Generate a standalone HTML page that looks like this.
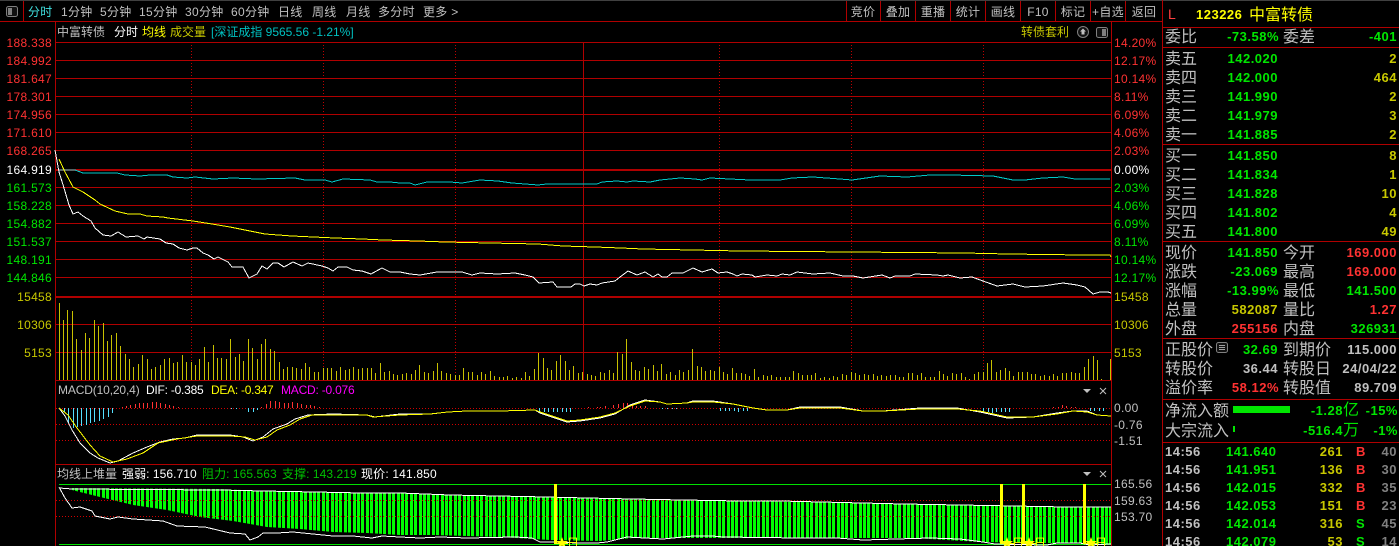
<!DOCTYPE html>
<html><head><meta charset="utf-8"><title>123226 中富转债</title>
<style>
html,body{margin:0;padding:0;background:#000;width:1399px;height:546px;overflow:hidden}
svg{display:block}
text{font-family:"Liberation Sans","WenQuanYi Zen Hei","Noto Sans CJK SC",sans-serif;font-size:12px;fill:#c0c0c0;letter-spacing:.3px}
.r{fill:#ff3232}.g{fill:#00e600}.y{fill:#c8c800}.w{fill:#fff}.Y{fill:#ff0}.c{fill:#00c0c0}.m{fill:#f0f}.d{fill:#00c000}.s{fill:#808080}
.e{text-anchor:end}.mid{text-anchor:middle}
.L{font-size:16px;letter-spacing:0}
.b{font-size:13px;font-weight:bold;letter-spacing:.5px}
.n{letter-spacing:0}
.u{font-size:16px;font-weight:normal;letter-spacing:0}
.crisp{shape-rendering:crispEdges}
.ln{fill:none;stroke-width:1;shape-rendering:crispEdges}
</style></head><body>
<svg width="1399" height="546" viewBox="0 0 1399 546" xmlns="http://www.w3.org/2000/svg">
<rect width="1399" height="546" fill="#000"/>
<rect width="1399" height="1" fill="#404040"/>

<!-- frame lines -->
<g class="crisp" stroke="#b00000" fill="none">
<path d="M0 21.5H1162M23.5 1V21M846.5 1V21M880.5 1V21M915.5 1V21M950.5 1V21M985.5 1V21M1020.5 1V21M1055.5 1V21M1090.5 1V21M1125.5 1V21"/>
<path d="M1162.5 0V546"/>
<path d="M55.5 21V546M1111.5 21V546"/>
<path d="M55 42.5H1111M55 60.5H1111M55 78.5H1111M55 96.5H1111M55 114.5H1111M55 132.5H1111M55 150.5H1111M55 187.5H1111M55 205.5H1111M55 223.5H1111M55 241.5H1111M55 259.5H1111M55 277.5H1111M55 324.5H1111M55 352.5H1111M55 380.5H1111M55 464.5H1111"/>
<path stroke-width="2" d="M55 170H1111M55 297H1111"/>
<path d="M583.5 42V380"/>
<path stroke="#c00000" stroke-dasharray="1 2" d="M191.5 42V380M323.5 42V380M455.5 42V380M719.5 42V380M851.5 42V380M983.5 42V380"/>
<path stroke="#d00000" stroke-dasharray="1 2" d="M56 408.5H1111M56 424.5H1111M56 440.5H1111"/>
<path d="M1163 27.5H1399M1163 47.5H1399M1163 144.5H1399M1163 241.5H1399M1163 338.5H1399M1163 399.5H1399M1163 442.5H1399"/>
</g>

<!-- toolbar -->
<rect x="6.5" y="6.5" width="11" height="10" rx="2" fill="#111" stroke="#808080"/>
<rect x="8" y="8" width="4" height="7" fill="#808080"/>
<g>
<text x="28" y="16" style="fill:#40e0e0">分时</text>
<text x="61" y="16">1分钟</text>
<text x="100" y="16">5分钟</text>
<text x="139" y="16">15分钟</text>
<text x="185" y="16">30分钟</text>
<text x="231" y="16">60分钟</text>
<text x="278" y="16">日线</text>
<text x="312" y="16">周线</text>
<text x="346" y="16">月线</text>
<text x="378" y="16">多分时</text>
<text x="423" y="16">更多 &gt;</text>
<text x="863" y="16" class="mid">竞价</text>
<text x="898" y="16" class="mid">叠加</text>
<text x="933" y="16" class="mid">重播</text>
<text x="968" y="16" class="mid">统计</text>
<text x="1003" y="16" class="mid">画线</text>
<text x="1038" y="16" class="mid">F10</text>
<text x="1073" y="16" class="mid">标记</text>
<text x="1108" y="16" class="mid">+自选</text>
<text x="1144" y="16" class="mid">返回</text>
</g>

<!-- chart title -->
<text x="57" y="36" class="n">中富转债</text>
<text x="114" y="36" class="w n">分时</text>
<text x="142" y="36" class="Y n">均线</text>
<text x="170" y="36" class="y n">成交量</text>
<text x="211" y="36" class="c" textLength="143" lengthAdjust="spacing">[深证成指 9565.56 -1.21%]</text>
<text x="1021" y="36" class="y n">转债套利</text>
<circle cx="1083" cy="32" r="5.5" fill="#111" stroke="#808080"/>
<path d="M1083 28.5l3 3h-1.500v3h-3v-3h-1.500z" fill="#c0c0c0"/>
<rect x="1096.500" y="27.500" width="11" height="10" rx="2" fill="#111" stroke="#808080"/>
<rect x="1102" y="29" width="4" height="7" fill="#808080"/>

<!-- left axis -->
<g class="e">
<text x="52" y="47" class="r e">188.338</text>
<text x="52" y="65" class="r e">184.992</text>
<text x="52" y="83" class="r e">181.647</text>
<text x="52" y="101" class="r e">178.301</text>
<text x="52" y="119" class="r e">174.956</text>
<text x="52" y="137" class="r e">171.610</text>
<text x="52" y="155" class="r e">168.265</text>
<text x="52" y="174" class="w e">164.919</text>
<text x="52" y="192" class="g e">161.573</text>
<text x="52" y="210" class="g e">158.228</text>
<text x="52" y="228" class="g e">154.882</text>
<text x="52" y="246" class="g e">151.537</text>
<text x="52" y="264" class="g e">148.191</text>
<text x="52" y="282" class="g e">144.846</text>
<text x="52" y="301" class="y e">15458</text>
<text x="52" y="329" class="y e">10306</text>
<text x="52" y="357" class="y e">5153</text>
</g>
<!-- right axis -->
<text x="1114" y="47" class="r">14.20%</text>
<text x="1114" y="65" class="r">12.17%</text>
<text x="1114" y="83" class="r">10.14%</text>
<text x="1114" y="101" class="r">8.11%</text>
<text x="1114" y="119" class="r">6.09%</text>
<text x="1114" y="137" class="r">4.06%</text>
<text x="1114" y="155" class="r">2.03%</text>
<text x="1114" y="174" class="w">0.00%</text>
<text x="1114" y="192" class="g">2.03%</text>
<text x="1114" y="210" class="g">4.06%</text>
<text x="1114" y="228" class="g">6.09%</text>
<text x="1114" y="246" class="g">8.11%</text>
<text x="1114" y="264" class="g">10.14%</text>
<text x="1114" y="282" class="g">12.17%</text>
<text x="1114" y="301" class="y">15458</text>
<text x="1114" y="329" class="y">10306</text>
<text x="1114" y="357" class="y">5153</text>
<text x="1114" y="412">0.00</text>
<text x="1114" y="429">-0.76</text>
<text x="1114" y="445">-1.51</text>
<text x="1114" y="488">165.56</text>
<text x="1114" y="505">159.63</text>
<text x="1114" y="521">153.70</text>

<!-- price lines -->
<polyline class="ln" stroke="#00c8c8" points="59,170 75,170 83,173 112,173 117,173 125,175 140,176 150,175 167,175 173,177 187,178 195,177 213,179 233,178 257,179 295,178 305,180 325,180 332,182 343,179 370,180 377,182 390,182 400,183 410,183 415,185 427,182 450,182 462,183 480,180 498,181 512,183 525,184 538,185 547,184 597,184 602,182 617,181 627,182 633,181 650,182 660,180 680,178 695,179 702,180 710,178 750,180 780,180 792,178 813,177 840,179 852,180 880,176 907,177 930,175 950,175 993,176 1013,180 1025,180 1043,178 1063,177 1075,179 1110,179"/>
<polyline class="ln" stroke="#ff0" points="59,159 65,172 73,187 83,192 95,200 100,204 115,211 128,214 140,214 147,216 163,217 168,218 193,221 212,224 230,227 265,234 292,236 335,238 362,239 383,240 418,241 445,242 489,243 538,244 563,246 595,247 621,248 643,249 692,250 740,251 853,252 964,253 1008,254 1083,255 1110,255 1111,257"/>
<polyline class="ln" stroke="#fff" points="55,150 59,172 64,188 69,205 73,214 78,212 83,216 91,221 95,228 103,235 111,236 118,232 126,237 138,236 144,239 147,237 160,239 166,243 173,244 179,248 187,250 193,248 197,248 203,253 208,255 214,259 218,257 228,262 232,267 243,267 249,278 257,274 262,266 267,269 273,263 278,263 284,267 293,262 302,266 308,263 322,266 328,268 333,271 338,267 347,267 353,270 362,271 371,274 382,268 390,272 400,272 410,274 420,275 437,272 462,272 472,275 480,273 497,274 515,273 525,275 533,277 539,283 553,282 557,287 571,287 575,284 580,284 584,286 590,284 597,285 602,283 615,281 620,277 628,271 637,275 645,272 653,277 658,274 662,277 667,277 672,273 683,273 693,268 702,272 712,269 718,273 727,272 733,274 737,276 742,274 752,275 755,277 767,275 777,276 782,274 790,275 797,272 813,274 830,273 843,276 853,276 863,278 882,275 890,278 895,276 910,276 915,274 937,275 943,276 948,275 960,278 972,277 983,281 997,286 1013,284 1025,287 1043,286 1063,283 1077,285 1085,287 1093,294 1100,292 1108,292 1111,293"/>

<!-- volume bars -->
<path fill="none" stroke="#c8c000" d="M59.5 380v-77m4 77v-60m4 60v-70m5 70v-69m4 69v-41m5 41v-30m4 30v-47m4 47v-42m5 42v-60m4 60v-54m5 54v-57m4 57v-39m4 39v-45m5 45v-47m4 47v-34m5 34v-26m4 26v-21m4 21v-13m5 13v-16m4 16v-25m5 25v-21m4 21v-11m4 11v-13m5 13v-15m4 15v-21m5 21v-22m4 22v-17m4 17v-18m5 18v-25m4 25v-18m5 18v-18m4 18v-15m4 15v-21m5 21v-33m4 33v-18m5 18v-35m4 35v-22m4 22v-22m5 22v-21m4 21v-41m5 41v-23m4 23v-26m4 26v-19m5 19v-41m4 41v-32m5 32v-21m4 21v-36m4 36v-41m5 41v-31m4 31v-29m5 29v-18m4 18v-11m4 11v-13m5 13v-13m4 13v-12m5 12v-11m4 11v-17m4 17v-13m5 13v-8m4 8v-8m5 8v-12m4 12v-12m4 12v-12m5 12v-9m4 9v-13m5 13v-10m4 10v-11m4 11v-13m5 13v-11m4 11v-12m5 12v-12m4 12v-12m4 12v-7m5 7v-17m4 17v-8m5 8v-9m4 9v-6m4 6v-5m5 5v-6m4 6v-7m5 7v-6m4 6v-10m4 10v-15m5 15v-8m4 8v-7m5 7v-9m4 9v-17m4 17v-9m5 9v-7m4 7v-6m5 6v-5m4 5v-5m4 5v-12m5 12v-8m4 8v-8m5 8v-5m4 5v-8m4 8v-6m5 6v-9m4 9v-4m5 4v-3m4 3v-3m4 3v-4m5 4v-2m4 2v-3m5 3v-2m4 2v-8m4 8v-4m5 4v-11m4 11v-27m5 27v-22m4 22v-12m4 12v-10m5 10v-19m4 19v-25m5 25v-19m4 19v-10m4 10v-14m5 14v-7m4 7v-8m5 8v-6m4 6v-5m4 5v-4m5 4v-8m4 8v-7m5 7v-10m4 10v-7m4 7v-28m5 28v-26m4 26v-41m5 41v-18m4 18v-10m4 10v-9m5 9v-13m4 13v-11m5 11v-15m4 15v-9m4 9v-16m5 16v-6m4 6v-8m5 8v-5m4 5v-10m4 10v-8m5 8v-10m4 10v-31m5 31v-14m4 14v-13m4 13v-9m5 9v-10m4 10v-9m5 9v-13m4 13v-8m4 8v-6m5 6v-12m4 12v-7m5 7v-7m4 7v-6m4 6v-4m5 4v-11m4 11v-3m5 3v-5m4 5v-4m4 4v-5m5 5v-3m4 3v-3m5 3v-3m4 3v-3m4 3v-9m5 9v-7m4 7v-5m5 5v-5m4 5v-5m4 5v-7m5 7v-2m4 2v-3m5 3v-2m4 2v-4m4 4v-3m5 3v-6m4 6v-5m5 5v-8m4 8v-7m4 7v-5m5 5v-6m4 6v-5m5 5v-6m4 6v-4m4 4v-5m5 5v-4m4 4v-5m5 5v-5m4 5v-3m4 3v-3m5 3v-7m4 7v-7m5 7v-5m4 5v-7m4 7v-3m5 3v-3m4 3v-3m5 3v-9m4 9v-6m4 6v-4m5 4v-7m4 7v-6m5 6v-7m4 7v-3m4 3v-1m5 1v-6m4 6v-8m5 8v-8m4 8v-17m4 17v-20m5 20v-8m4 8v-10m5 10v-12m4 12v-9m4 9v-4m5 4v-8m4 8v-8m5 8v-8m4 8v-6m4 6v-6m5 6v-4m4 4v-5m5 5v-4m4 4v-6m4 6v-4m5 4v-7m4 7v-7m5 7v-8m4 8v-7m4 7v-7m5 7v-13m4 13v-21m5 21v-24m4 24v-20m4 20v-1m9 1v-21"/>

<!-- MACD header -->
<text x="58" y="394" textLength="82" lengthAdjust="spacing">MACD(10,20,4)</text>
<text x="146" y="394" class="w" textLength="58" lengthAdjust="spacing">DIF: -0.385</text>
<text x="211" y="394" class="Y" textLength="63" lengthAdjust="spacing">DEA: -0.347</text>
<text x="281" y="394" class="m" textLength="74" lengthAdjust="spacing">MACD: -0.076</text>
<path d="M1083 389h8l-4 4z" fill="#c0c0c0"/>
<path d="M1100 388l6 6m0-6l-6 6" stroke="#c0c0c0" fill="none"/>

<!-- MACD hist -->
<path transform="translate(.5 0)" fill="none" stroke="#55e0ff" d="M64 408V412M68 408V423M73 408V428M77 408V427M81 408V426M86 408V425M90 408V423M94 408V422M99 408V421M103 408V419M108 408V417M112 408V413M231 408V409M236 408V409M248 408V412M253 408V412M257 408V410M539 408V412M544 408V412M548 408V412M553 408V412M557 408V412M562 408V412M566 408V412M570 408V412M662 408V409M667 408V409M672 408V409M676 408V409M720 408V411M725 408V411M729 408V411M734 408V411M738 408V412M743 408V411M747 408V411M983 408V412M988 408V412M992 408V413M996 408V412M1001 408V412M1005 408V412M1009 408V412M1090 408V411M1094 408V411M1099 408V411M1103 408V411"/>
<path transform="translate(.5 0)" fill="none" stroke="#ff3232" d="M122 408V407M126 408V406M130 408V405M135 408V404M139 408V403M143 408V403M147 408V403M152 408V402M156 408V402M160 408V403M165 408V404M169 408V405M173 408V406M178 408V407M261 408V407M266 408V404M270 408V401M275 408V401M279 408V402M284 408V403M288 408V403M292 408V402M297 408V403M301 408V404M306 408V405M310 408V405M314 408V406M319 408V407M588 408V407M597 408V407M600 408V407M605 408V406M613 408V405M618 408V404M623 408V403M627 408V403M632 408V404M636 408V406M640 408V406M645 408V406M1053 408V407M1058 408V407M1062 408V405M1066 408V406M1071 408V407M1075 408V407"/>

<!-- MACD lines -->
<polyline class="ln" stroke="#fff" points="59,408 65,416 72,430 80,443 90,453 98,458 110,463 118,461 133,453 147,447 160,442 173,439 185,438 197,435 213,435 230,435 243,437 253,441 263,437 273,429 287,424 295,419 308,415 333,414 367,415 375,417 400,414 430,414 448,412 467,411 500,411 535,410 540,413 555,418 567,422 580,421 600,418 615,414 630,405 645,400 660,402 667,404 687,403 693,401 713,401 733,404 753,408 767,410 787,410 800,407 840,407 863,411 883,411 920,408 957,408 980,412 1007,418 1033,417 1057,413 1073,411 1087,411 1097,415 1111,416"/>
<polyline class="ln" stroke="#ff0" points="59,408 68,415 77,428 90,445 100,456 113,462 127,459 143,453 158,443 177,439 197,436 230,436 245,437 255,440 267,437 277,430 290,425 300,419 312,415 333,415 367,415 373,417 400,415 430,414 448,412 467,411 500,411 535,410 540,412 555,417 567,421 580,420 600,417 615,413 630,406 645,401 660,402 667,404 687,403 693,402 713,402 733,404 753,408 767,410 787,410 800,408 840,408 863,411 883,411 920,409 957,409 980,411 1007,417 1033,417 1057,414 1073,411 1087,412 1097,415 1111,416"/>

<!-- bottom pane header -->
<text x="57" y="478" class="n">均线上堆量</text>
<text x="122" y="478" class="w" textLength="75" lengthAdjust="spacing">强弱: 156.710</text>
<text x="202" y="478" class="d" textLength="75" lengthAdjust="spacing">阻力: 165.563</text>
<text x="282" y="478" class="d" textLength="75" lengthAdjust="spacing">支撑: 143.219</text>
<text x="361" y="478" class="w" textLength="76" lengthAdjust="spacing">现价: 141.850</text>
<path d="M1083 472h8l-4 4z" fill="#c0c0c0"/>
<path d="M1100 471l6 6m0-6l-6 6" stroke="#c0c0c0" fill="none"/>

<defs><clipPath id="gb"><polygon points="72,488 220,489 263,491 315,492 362,493 400,493 450,495 498,496 547,497 587,498 633,499 683,500 740,501 800,502 903,504 960,505 1013,506 1067,507 1111,507 1111,544 980,542 913,538 800,538 733,538 667,538 633,538 600,541 550,540 500,537 433,535 400,535 367,533 333,532 300,529 267,527 233,521 200,517 167,510 133,505 100,497 72,490"/></clipPath></defs>
<g clip-path="url(#gb)"><line x1="53" y1="516" x2="1111" y2="516" stroke="#00ff00" stroke-width="60" stroke-dasharray="3 2 3 1 3 2 3 1 3 1"/></g>
<path class="crisp" stroke="#00e000" fill="none" d="M59 484.5H1111M59 544.5H1111"/>
<path stroke="#d00000" stroke-dasharray="1 2" fill="none" class="crisp" d="M56 500.5H1111M56 516.5H1111"/>
<polyline class="ln" stroke="#fff" points="59,488 72,489 220,490 263,491 315,492 362,493 400,493 450,495 498,496 547,497 587,498 633,499 683,500 740,501 780,501 903,504 960,505 1013,506 1067,507 1111,507"/>
<polyline class="ln" stroke="#fff" points="59,487 65,498 72,508 80,507 92,511 95,516 110,519 118,517 133,519 163,521 177,526 205,527 230,533 245,534 250,540 258,537 263,533 277,533 293,532 333,536 353,536 372,538 382,536 400,537 420,538 440,537 467,538 515,537 532,538 540,542 557,542 577,543 597,543 607,542 627,537 663,539 693,536 712,536 723,537 800,538 837,538 863,540 930,538 960,539 983,542 995,544 1047,545 1057,543 1080,543 1090,545 1111,544"/>

<!-- yellow signals -->
<g fill="#ff0">
<rect x="554" y="484" width="3" height="60"/><rect x="554" y="543" width="14" height="1"/>
<rect x="1000" y="484" width="3" height="60"/><rect x="1000" y="543" width="14" height="1"/>
<rect x="1022" y="484" width="3" height="60"/><rect x="1022" y="543" width="14" height="1"/>
<rect x="1083" y="484" width="3" height="60"/><rect x="1083" y="543" width="14" height="1"/>
<path d="M562 537l1.500 4h4.500l-3.500 3 1.500 4-4-2.500-4 2.500 1.500-4-3.500-3h4.500z"/>
<path d="M1007 537l1.500 4h4.500l-3.500 3 1.500 4-4-2.500-4 2.500 1.500-4-3.500-3h4.500z"/>
<path d="M1029 537l1.500 4h4.500l-3.500 3 1.500 4-4-2.500-4 2.500 1.500-4-3.500-3h4.500z"/>
<path d="M1091 537l1.500 4h4.500l-3.500 3 1.500 4-4-2.500-4 2.500 1.500-4-3.500-3h4.500z"/>
</g>
<g>
<text x="573" y="547" class="Y mid n">日</text>
<text x="1018" y="547" class="Y mid n">日</text>
<text x="1040" y="547" class="Y mid n">日</text>
<text x="1101" y="547" class="Y mid n">日</text>
</g>

<!-- right panel -->
<text x="1168" y="19" style="fill:#ff4040;font-size:14px">L</text>
<text x="1196" y="19" class="Y b">123226</text>
<text x="1249" y="20" class="Y L">中富转债</text>

<text x="1165" y="42" class="L">委比</text><text x="1279" y="41" class="g b e">-73.58%</text>
<text x="1283" y="42" class="L">委差</text><text x="1397" y="41" class="g b e">-401</text>

<text x="1165" y="64" class="L">卖五</text><text x="1278" y="63" class="g b e">142.020</text><text x="1397" y="63" class="y b e">2</text>
<text x="1165" y="83" class="L">卖四</text><text x="1278" y="82" class="g b e">142.000</text><text x="1397" y="82" class="y b e">464</text>
<text x="1165" y="102" class="L">卖三</text><text x="1278" y="101" class="g b e">141.990</text><text x="1397" y="101" class="y b e">2</text>
<text x="1165" y="121" class="L">卖二</text><text x="1278" y="120" class="g b e">141.979</text><text x="1397" y="120" class="y b e">3</text>
<text x="1165" y="140" class="L">卖一</text><text x="1278" y="139" class="g b e">141.885</text><text x="1397" y="139" class="y b e">2</text>

<text x="1165" y="161" class="L">买一</text><text x="1278" y="160" class="g b e">141.850</text><text x="1397" y="160" class="y b e">8</text>
<text x="1165" y="180" class="L">买二</text><text x="1278" y="179" class="g b e">141.834</text><text x="1397" y="179" class="y b e">1</text>
<text x="1165" y="199" class="L">买三</text><text x="1278" y="198" class="g b e">141.828</text><text x="1397" y="198" class="y b e">10</text>
<text x="1165" y="218" class="L">买四</text><text x="1278" y="217" class="g b e">141.802</text><text x="1397" y="217" class="y b e">4</text>
<text x="1165" y="237" class="L">买五</text><text x="1278" y="236" class="g b e">141.800</text><text x="1397" y="236" class="y b e">49</text>

<text x="1165" y="258" class="L">现价</text><text x="1278" y="257" class="g b e">141.850</text>
<text x="1283" y="258" class="L">今开</text><text x="1397" y="257" class="r b e">169.000</text>
<text x="1165" y="277" class="L">涨跌</text><text x="1278" y="276" class="g b e">-23.069</text>
<text x="1283" y="277" class="L">最高</text><text x="1397" y="276" class="r b e">169.000</text>
<text x="1165" y="296" class="L">涨幅</text><text x="1279" y="295" class="g b e">-13.99%</text>
<text x="1283" y="296" class="L">最低</text><text x="1397" y="295" class="g b e">141.500</text>
<text x="1165" y="315" class="L">总量</text><text x="1278" y="314" class="y b e">582087</text>
<text x="1283" y="315" class="L">量比</text><text x="1397" y="314" class="r b e">1.27</text>
<text x="1165" y="334" class="L">外盘</text><text x="1278" y="333" class="r b e">255156</text>
<text x="1283" y="334" class="L">内盘</text><text x="1397" y="333" class="g b e">326931</text>

<text x="1165" y="355" class="L">正股价</text>
<rect x="1216.500" y="342.500" width="11" height="10" rx="2" fill="#111" stroke="#808080"/>
<path d="M1219 345.500h6M1219 347.500h6M1219 349.500h6" stroke="#a0a0a0" class="crisp" fill="none"/>
<text x="1278" y="354" class="g b e">32.69</text>
<text x="1283" y="355" class="L">到期价</text><text x="1397" y="354" class="b e">115.000</text>
<text x="1165" y="374" class="L">转股价</text><text x="1278" y="373" class="b e">36.44</text>
<text x="1283" y="374" class="L">转股日</text><text x="1397" y="373" class="b e">24/04/22</text>
<text x="1165" y="393" class="L">溢价率</text><text x="1279" y="392" class="r b e">58.12%</text>
<text x="1283" y="393" class="L">转股值</text><text x="1397" y="392" class="b e">89.709</text>

<text x="1165" y="416" class="L">净流入额</text>
<rect x="1233" y="406" width="57" height="7" fill="#00e600"/>
<text x="1359" y="415" class="g b e">-1.28<tspan class="u g">亿</tspan></text><text x="1398" y="415" class="g b e">-15%</text>
<text x="1165" y="436" class="L">大宗流入</text>
<rect x="1233" y="426" width="2" height="6" fill="#00e600"/>
<text x="1359" y="435" class="g b e">-516.4<tspan class="u g">万</tspan></text><text x="1398" y="435" class="g b e">-1%</text>

<text x="1165" y="456" class="b">14:56</text><text x="1226" y="456" class="g b">141.640</text><text x="1343" y="456" class="y b e">261</text><text x="1356" y="456" class="r b">B</text><text x="1397" y="456" class="s b e">40</text>
<text x="1165" y="474" class="b">14:56</text><text x="1226" y="474" class="g b">141.951</text><text x="1343" y="474" class="y b e">136</text><text x="1356" y="474" class="r b">B</text><text x="1397" y="474" class="s b e">30</text>
<text x="1165" y="492" class="b">14:56</text><text x="1226" y="492" class="g b">142.015</text><text x="1343" y="492" class="y b e">332</text><text x="1356" y="492" class="r b">B</text><text x="1397" y="492" class="s b e">35</text>
<text x="1165" y="510" class="b">14:56</text><text x="1226" y="510" class="g b">142.053</text><text x="1343" y="510" class="y b e">151</text><text x="1356" y="510" class="r b">B</text><text x="1397" y="510" class="s b e">23</text>
<text x="1165" y="528" class="b">14:56</text><text x="1226" y="528" class="g b">142.014</text><text x="1343" y="528" class="y b e">316</text><text x="1356" y="528" class="g b">S</text><text x="1397" y="528" class="s b e">45</text>
<text x="1165" y="546" class="b">14:56</text><text x="1226" y="546" class="g b">142.079</text><text x="1343" y="546" class="y b e">53</text><text x="1356" y="546" class="g b">S</text><text x="1397" y="546" class="s b e">14</text>
</svg>
</body></html>
